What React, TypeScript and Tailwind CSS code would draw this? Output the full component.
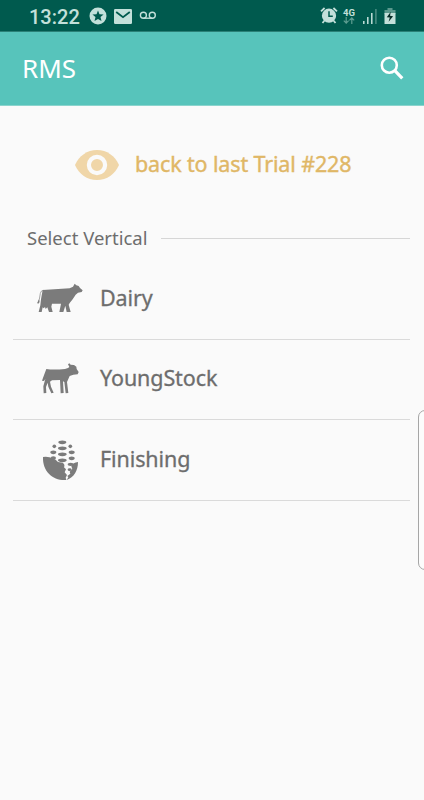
import type { ReactNode } from "react";

function StatusBar() {
  return (
    <div className="flex h-8 items-center justify-between border-b border-[#2b8177] bg-[#005a4e] pr-7 pl-[29px] text-[#c3e0da]">
      <div className="flex items-center">
        <span className="w-[60px] pt-0.5 font-['Roboto',sans-serif] text-[20px] leading-[30px] font-medium whitespace-nowrap">
          13:22
        </span>
        <svg className="h-[18px] w-[18px]" viewBox="0 0 18 18" fill="currentColor">
          <path
            fillRule="evenodd"
            d="M9 .5a8.5 8.5 0 1 0 0 17a8.5 8.5 0 0 0 0-17zM9 3.4l1.5 3.8 4.1.3-3.1 2.6 1 4L9 11.9l-3.5 2.2 1-4-3.1-2.6 4.1-.3z"
          />
        </svg>
        <svg className="mt-0.5 ml-[7px] h-[15px] w-[18px]" viewBox="0 0 18 15">
          <rect width="18" height="15" rx="1.2" fill="currentColor" />
          <path d="M2.2 3L9 8.2 15.8 3" fill="none" stroke="#005a4e" strokeWidth="1.8" />
        </svg>
        <svg
          className="ml-[7px] h-[9px] w-[18px]"
          viewBox="0 0 18 9"
          fill="none"
          stroke="currentColor"
          strokeWidth="1.4"
        >
          <circle cx="4.4" cy="4.2" r="3" />
          <circle cx="13.3" cy="4.2" r="3" />
          <path d="M4.4 7.2h8.9" />
        </svg>
      </div>

      <div className="flex items-center">
        <svg className="h-[17px] w-[18px]" viewBox="0 0 18 17">
          <circle cx="9" cy="8.7" r="7.1" fill="currentColor" />
          <path
            d="M1 4.4L4.6 1M17 4.4L13.4 1M4.3 13.8L2.5 16M13.7 13.8L15.5 16"
            stroke="currentColor"
            strokeWidth="1.8"
          />
          <path d="M9 4.3V9.2H12.8" fill="none" stroke="#005a4e" strokeWidth="1.5" />
        </svg>
        <div className="ml-[5px] flex w-3 flex-col items-center">
          <span className="font-['Roboto',sans-serif] text-[9.5px] leading-[9px] font-bold">4G</span>
          <svg
            className="h-[7px] w-3"
            viewBox="0 0 12 7"
            fill="none"
            stroke="#5f9e92"
            strokeWidth="1.2"
          >
            <path d="M3.2 0v6M.8 3.7l2.4 2.4 2.4-2.4M8.8 7V1M6.4 3.3L8.8.9l2.4 2.4" />
          </svg>
        </div>
        <svg className="mt-px ml-2 h-[15px] w-[14px]" viewBox="0 0 14 15">
          <path d="M.8 12v3M4.8 8v7M8.8 4v11" stroke="currentColor" strokeWidth="1.5" />
          <path d="M12.9 0v15" stroke="#4c8f84" strokeWidth="1.5" />
        </svg>
        <svg className="ml-[7px] h-4 w-3" viewBox="0 0 12 16">
          <path d="M3.5 0h5v2H11.5v4H.5V2h3z" fill="#5a988d" />
          <path d="M.5 5h11v11H.5z" fill="currentColor" />
          <path d="M6.8 3.7L2.8 9.2l3 .3-1.2 4.2L9.1 8.3 6 7.8z" fill="#062c27" />
        </svg>
      </div>
    </div>
  );
}

function AppBar() {
  return (
    <header className="flex h-[74px] items-center justify-between border-b border-[#8bd4cd] bg-[#57c4bb] pr-5 pb-0.5 pl-[22px] text-white">
      <h1 className="font-['Noto_Sans',sans-serif] text-[26px] leading-none">RMS</h1>
      <svg
        className="h-6 w-6"
        viewBox="0 0 24 24"
        fill="none"
        stroke="currentColor"
        strokeWidth="2.6"
      >
        <circle cx="9.3" cy="9.2" r="7.5" />
        <path d="M14.6 14.4L22.3 22.4" strokeWidth="3.2" />
      </svg>
    </header>
  );
}

function DairyIcon() {
  return (
    <svg className="h-[50px] w-[60px]" viewBox="0 0 180 150" fill="#7b7b7b">
      <path d="M38 48L119 43 129 38 134 29 139 34 146 36 150 42 158 49 155 54 144 56 137 62 128 76 119 87 116 92 122 114 110 114 106 95 100 114 88 114 93 89 66 89 64 98 68 114 57 114 52 100 47 105 45 99 41 103 38 100 35 114 26 114 31 94 33 76z" />
      <path d="M40 49Q33 49 31 58L28 76 24 86" fill="none" stroke="#7b7b7b" strokeWidth="2" />
      <path d="M27 76L22 86 24 90 29 84z" />
    </svg>
  );
}

function YoungStockIcon() {
  return (
    <svg className="h-[50px] w-[60px]" viewBox="0 0 180 150" fill="#7b7b7b">
      <path d="M49 45Q70 48 105 45L114 42 118 39 114 31 118 28 122 32 132 33 139 38 140 45 146 54 143 61 130 62 119 66 114 77 111 84 115 117 107 118 103 84 99 82 101 117 92 118 90 78 66 79 60 83 63 98 71 116 64 118 55 98 53 86 48 99 49 117 41 118 40 97 46 75 42 81 36 80 43 61z" />
    </svg>
  );
}

function FinishingIcon() {
  return (
    <svg className="h-[60px] w-[60px]" viewBox="0 0 180 180" fill="#7b7b7b">
      <path d="M39 81Q56 79 68 85Q78 88 84 96L98 98Q106 103 102 112L108 118 104 127 111 135 107 143 109 150C70 153 37 125 39 81z" />
      <path d="M144 96C144 122 132 142 110 150L115 142 112 138 121 131 119 125 127 117 124 109Q129 97 144 96z" />
      <ellipse cx="97" cy="37" rx="12" ry="5.5" />
      <ellipse cx="97" cy="55" rx="13" ry="5.5" />
      <ellipse cx="97" cy="73" rx="13" ry="5.5" />
      <ellipse cx="97" cy="91" rx="13" ry="5.5" />
      <circle cx="73" cy="49" r="5.5" />
      <circle cx="121" cy="49" r="5.5" />
      <ellipse cx="70" cy="67" rx="9" ry="5.5" />
      <ellipse cx="125" cy="67" rx="9" ry="5.5" />
      <ellipse cx="70" cy="84" rx="8" ry="5" />
      <ellipse cx="125" cy="85" rx="9" ry="5.5" />
      <ellipse cx="122" cy="103" rx="9" ry="5" />
      <ellipse cx="119" cy="119" rx="6" ry="4" />
    </svg>
  );
}

function VerticalRow({ icon, label }: { icon: ReactNode; label: string }) {
  return (
    <li className="flex h-[80.5px] items-center border-b border-[#dadada] pl-[17px]">
      <span className="flex w-[70px] items-center">{icon}</span>
      <span className="pb-[3px] font-['Noto_Sans',sans-serif] text-[21.5px] leading-none tracking-[-0.1px] text-[#6d6d6d] [-webkit-text-stroke:0.3px_#6d6d6d]">
        {label}
      </span>
    </li>
  );
}

export default function App() {
  return (
    <div className="relative h-[800px] w-[424px] overflow-hidden bg-[#fafafa]">
      <StatusBar />
      <AppBar />

      <main>
        <button className="flex h-[118px] w-full items-center pl-[75px] text-left">
          <svg className="h-[30px] w-11" viewBox="0 0 44 30">
            <path
              d="M0 15C4 6 12 0 22 0s18 6 22 15C40 24 32 30 22 30S4 24 0 15z"
              fill="#f0d6a8"
            />
            <circle cx="22" cy="15" r="8.1" fill="#f0d6a8" stroke="#fafafa" strokeWidth="4.2" />
          </svg>
          <span className="ml-4 pb-0.5 font-['Noto_Sans',sans-serif] text-[21.5px] leading-none tracking-[-0.14px] whitespace-nowrap text-[#e0b766] [-webkit-text-stroke:0.4px_#e0b766]">
            back to last Trial #228
          </span>
        </button>

        <section className="pr-[14px] pl-[13px]">
          <div className="flex h-7 items-center pl-[14px]">
            <h2 className="w-[134px] font-['Noto_Sans',sans-serif] text-[18.5px] leading-none whitespace-nowrap text-[#6d6d6d]">
              Select Vertical
            </h2>
            <div className="h-px flex-1 bg-[#d6d6d6]" />
          </div>
          <ul className="mt-[7px]">
            <VerticalRow icon={<DairyIcon />} label="Dairy" />
            <VerticalRow icon={<YoungStockIcon />} label="YoungStock" />
            <VerticalRow icon={<FinishingIcon />} label="Finishing" />
          </ul>
        </section>
      </main>

      <div className="absolute top-[410px] -right-2 h-[160px] w-[14px] rounded-[8px] border border-[#a6a6a6] bg-[#fcfcfc]" />
    </div>
  );
}
